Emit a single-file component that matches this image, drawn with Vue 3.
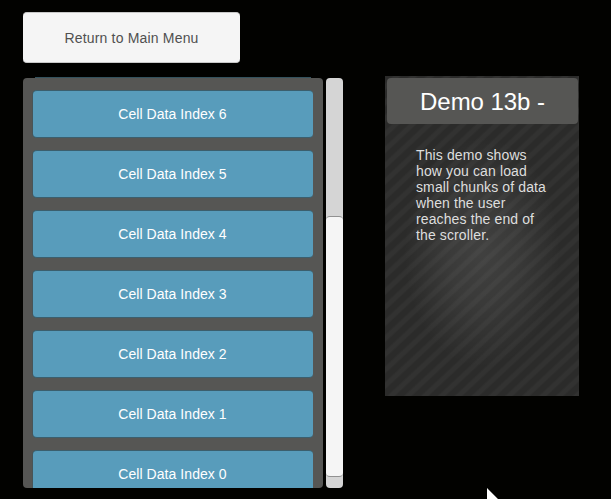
<script setup>
const cells = [6, 5, 4, 3, 2, 1, 0]
</script>

<template>
  <main class="screen">
    <div class="left">
      <button class="back">Return to Main Menu</button>
      <div class="list-row">
        <div class="list">
          <div class="previous"></div>
          <div class="cells">
            <div v-for="i in cells" :key="i" class="cell">Cell Data Index {{ i }}</div>
          </div>
        </div>
        <div class="track"><div class="thumb"></div></div>
      </div>
    </div>
    <aside class="info">
      <h1>Demo 13b -</h1>
      <p>This demo shows<br>how you can load<br>small chunks of data<br>when the user<br>reaches the end of<br>the scroller.</p>
    </aside>
    <svg class="cursor" width="12" height="18" viewBox="0 0 12 18"><path d="M0 0L12 12H7L10 18H5L3 14L0 17Z" fill="#fff" /></svg>
  </main>
</template>

<style>
html, body { background: #020200; overflow: hidden; }
</style>
<style scoped>
* { box-sizing: border-box; }
.screen {
  position: relative;
  width: 611px;
  height: 499px;
  overflow: hidden;
  background: #020200;
  padding: 12px 0 0 23px;
  display: flex;
  gap: 42px;
  align-items: flex-start;
  font-family: "Liberation Sans", Arial, sans-serif;
}
.left { width: 320px; }
.back {
  display: block;
  width: 217px;
  height: 51px;
  padding: 0;
  border: 1px solid #c8c8c8;
  border-width: 1px 0;
  border-radius: 4px;
  background: #f5f5f5;
  color: #505050;
  font: 14px "Liberation Sans", Arial, sans-serif;
  letter-spacing: 0.18px;
}
.list-row { display: flex; gap: 3px; margin-top: 14px; height: 411px; }
.list { width: 300px; }
.previous { height: 1px; margin: 0 12px; background: #34525d; }
.cells {
  height: 410px;
  overflow: hidden;
  border-radius: 4px;
  background: #565654;
  padding: 12px 10px 0;
}
.cell {
  height: 48px;
  margin-bottom: 12px;
  border: 1px solid #3b5f6e;
  border-width: 1px 0;
  border-radius: 4px;
  background: #589cbb;
  box-shadow: -1px 0 0 -0.5px #38545f;
  color: #fff;
  font-size: 14px;
  line-height: 47px;
  text-align: center;
  padding-right: 1px;
  letter-spacing: 0.06px;
}
.track {
  width: 17px;
  height: 410px;
  margin-top: 1px;
  border-radius: 4px;
  background: #d5d5d5;
  padding-top: 138px;
}
.thumb {
  height: 261px;
  border-radius: 4px;
  background: #f5f5f5;
  border: 1px solid #919191;
  border-width: 1px 0;
}
.info {
  width: 194px;
  height: 320px;
  margin-top: 64px;
  padding: 2px 1px 2px 2px;
  background:
    radial-gradient(ellipse 78px 115px at 50% 55%, rgba(255,255,255,.1), rgba(255,255,255,.07) 45%, transparent),
    repeating-linear-gradient(137deg, #2b2b2a 0 4.6px, #323231 6.6px 9.7px, #2b2b2a 11.5px);
}
h1 {
  margin: 0;
  height: 46px;
  border-radius: 4px;
  background: #565654;
  color: #fff;
  font-size: 24px;
  font-weight: 400;
  line-height: 48px;
  text-align: center;
  letter-spacing: -0.05px;
}
p {
  margin: 23px 0 0 29px;
  color: #dedede;
  font-size: 14px;
  line-height: 16px;
  white-space: nowrap;
  letter-spacing: 0.12px;
}
.cursor { position: absolute; left: 487px; top: 488px; }
</style>
